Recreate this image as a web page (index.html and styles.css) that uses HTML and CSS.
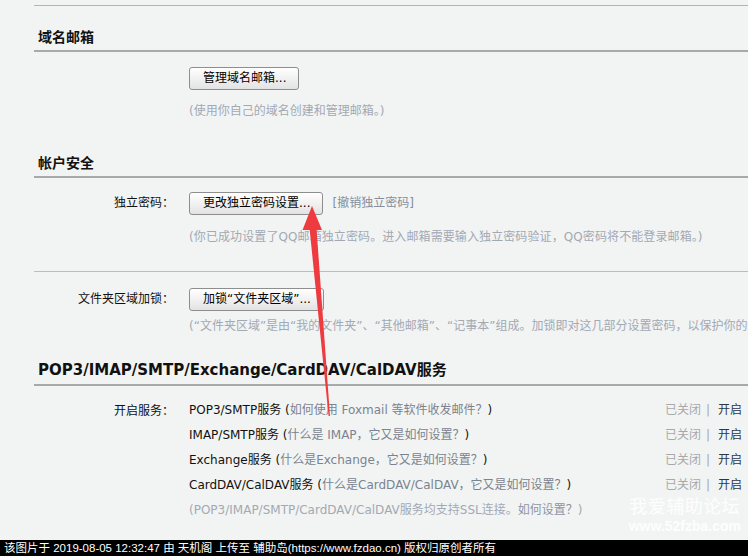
FILE: index.html
```html
<!DOCTYPE html>
<html lang="zh-CN">
<head>
    <meta charset="UTF-8">
    <meta name="viewport" content="width=device-width, initial-scale=1.0">
    <title>帐户设置</title>
    <link rel="stylesheet" href="styles.css">
</head>
<body>
    <div class="screen">
        <main class="settings">
            <div class="top-rule"></div>

            <section class="block">
                <h2 class="block-title">域名邮箱</h2>
                <div class="block-body">
                    <div class="field">
                        <div class="field-label"></div>
                        <div class="field-main">
                            <button class="btn">管理域名邮箱...</button>
                            <p class="hint hint-domain">(使用你自己的域名创建和管理邮箱。)</p>
                        </div>
                    </div>
                </div>
            </section>

            <section class="block block-security">
                <h2 class="block-title">帐户安全</h2>
                <div class="block-body">
                    <div class="field">
                        <div class="field-label">独立密码：</div>
                        <div class="field-main">
                            <div class="btn-line">
                                <button class="btn">更改独立密码设置...</button>
                                <a class="side-link">[撤销独立密码]</a>
                            </div>
                            <p class="hint hint-password">(你已成功设置了QQ邮箱独立密码。进入邮箱需要输入独立密码验证，QQ密码将不能登录邮箱。)</p>
                        </div>
                    </div>
                    <div class="divider"></div>
                    <div class="field field-folder">
                        <div class="field-label">文件夹区域加锁：</div>
                        <div class="field-main">
                            <button class="btn">加锁“文件夹区域”...</button>
                            <p class="hint hint-folder">(“文件夹区域”是由“我的文件夹”、“其他邮箱”、“记事本”组成。加锁即对这几部分设置密码，以保护你的信</p>
                        </div>
                    </div>
                </div>
            </section>

            <section class="block block-services">
                <h2 class="block-title block-title-latin">POP3/IMAP/SMTP/Exchange/CardDAV/CalDAV服务</h2>
                <div class="block-body services-body">
                    <div class="field">
                        <div class="field-label field-label-row">开启服务：</div>
                        <div class="field-main">
                            <div class="service">
                                <span class="service-name">POP3/SMTP服务 (<a class="help">如何使用 Foxmail 等软件收发邮件？</a>)</span>
                                <span class="service-state"><span class="off">已关闭</span><span class="sep">|</span><a class="on">开启</a></span>
                            </div>
                            <div class="service">
                                <span class="service-name">IMAP/SMTP服务 (<a class="help">什么是 IMAP，它又是如何设置？</a>)</span>
                                <span class="service-state"><span class="off">已关闭</span><span class="sep">|</span><a class="on">开启</a></span>
                            </div>
                            <div class="service">
                                <span class="service-name">Exchange服务 (<a class="help">什么是Exchange，它又是如何设置？</a>)</span>
                                <span class="service-state"><span class="off">已关闭</span><span class="sep">|</span><a class="on">开启</a></span>
                            </div>
                            <div class="service">
                                <span class="service-name">CardDAV/CalDAV服务 (<a class="help">什么是CardDAV/CalDAV，它又是如何设置？</a>)</span>
                                <span class="service-state"><span class="off">已关闭</span><span class="sep">|</span><a class="on">开启</a></span>
                            </div>
                            <div class="service service-note">(POP3/IMAP/SMTP/CardDAV/CalDAV服务均支持SSL连接。<a class="note-link">如何设置？</a>)</div>
                        </div>
                    </div>
                </div>
            </section>
        </main>

        <footer class="credit">该图片于 2019-08-05 12:32:47 由 天机阁 上传至 辅助岛(https://www.fzdao.cn) 版权归原创者所有</footer>

        <div class="watermark">
            <div class="watermark-cn">我爱辅助论坛</div>
            <div class="watermark-url">www.52fzba.com</div>
        </div>

        <svg class="arrow" width="748" height="556" viewBox="0 0 748 556">
            <polygon points="309.5,228 316.5,228 330,416 328.6,416" fill="#ee3b40"/>
            <polygon points="312,206 322,230 302.5,230" fill="#ee3b40"/>
        </svg>
    </div>
</body>
</html>
```

FILE: styles.css
```css
:root {
    --page-bg: #f2f4f3;
    --rule: #a9a9a9;
    --hint: #a2a9b3;
    --link-gray: #7b8390;
    --text: #111;
}

* {
    box-sizing: border-box;
}

body {
    margin: 0;
    background-color: var(--page-bg);
    color: var(--text);
    font-family: "DejaVu Sans", "Noto Sans CJK SC", sans-serif;
    font-size: 12px;
}

.screen {
    position: relative;
    width: 748px;
    height: 556px;
    overflow: hidden;
    display: flex;
    flex-direction: column;
}

.settings {
    flex: 1;
    padding-left: 34px;
    overflow: hidden;
    white-space: nowrap;
}

.top-rule {
    margin-top: 5px;
    border-top: 1px solid #b4b4b4;
}

.block-title {
    margin: 0;
    padding: 22px 0 4px 4px;
    font-family: "DejaVu Sans", "Noto Sans CJK SC", sans-serif;
    font-size: 14px;
    font-weight: bold;
    line-height: 18px;
    border-bottom: 2px solid var(--rule);
}

.block-title-latin {
    padding-top: 21px;
    font-size: 15px;
    line-height: 20px;
}

.block-body {
    padding-top: 15px;
}

.block-security {
    margin-top: 11px;
}

.block-security .block-body {
    padding-top: 14px;
}

.block-services {
    margin-top: 3px;
}

.services-body {
    padding-top: 12px;
}

.field {
    display: flex;
    align-items: flex-start;
}

.field-label {
    flex: 0 0 140px;
    margin-right: 15px;
    text-align: right;
    line-height: 23px;
}

.field-label-row {
    line-height: 27px;
}

.field-main {
    flex: 1;
    min-width: 0;
}

.btn-line {
    display: flex;
    align-items: center;
}

.btn {
    height: 23px;
    padding: 0 12px 0 13px;
    border: 1px solid #8e8e8e;
    border-radius: 3px;
    background: linear-gradient(#ffffff, #e3e3e3);
    color: #000;
    font-family: "DejaVu Sans", "Noto Sans CJK SC", sans-serif;
    font-size: 12px;
    line-height: 21px;
    cursor: pointer;
}

.side-link {
    margin-left: 9px;
    color: #858e9c;
    margin-top: -4px;
}

.hint {
    margin: 0;
    color: var(--hint);
    line-height: 20px;
}

.hint-domain {
    margin-top: 11px;
}

.hint-password {
    margin-top: 12px;
    letter-spacing: 0.1px;
}

.hint-folder {
    margin-top: 5px;
}

.divider {
    margin-top: 24px;
    border-top: 1px solid #bcbcbc;
}

.field-folder {
    margin-top: 16px;
}

.service {
    display: flex;
    line-height: 25px;
}

.service-name {
    flex: 1;
}

.help {
    color: var(--link-gray);
}

.service-state {
    margin-right: 6px;
}

.off {
    color: #a8a8a8;
}

.sep {
    margin: 0 8px 0 5px;
    color: #a8a8a8;
}

.on {
    color: #2f3747;
}

.service-note {
    color: var(--hint);
}

.note-link {
    color: #8d95a2;
}

.credit {
    height: 16px;
    padding-left: 4px;
    background-color: #000;
    color: #fff;
    font-family: "Liberation Sans", "Noto Sans CJK SC", sans-serif;
    font-size: 11.5px;
    line-height: 16px;
    white-space: nowrap;
}

.watermark {
    position: absolute;
    right: 7px;
    bottom: 22px;
    color: rgba(255, 255, 255, 0.9);
    text-align: center;
}

.watermark-cn {
    font-size: 18px;
    line-height: 22px;
    letter-spacing: 0.5px;
}

.watermark-url {
    font-family: "Liberation Sans", sans-serif;
    font-size: 14px;
    font-weight: bold;
    line-height: 16px;
}

.arrow {
    position: absolute;
    top: 0;
    left: 0;
    pointer-events: none;
}
```
